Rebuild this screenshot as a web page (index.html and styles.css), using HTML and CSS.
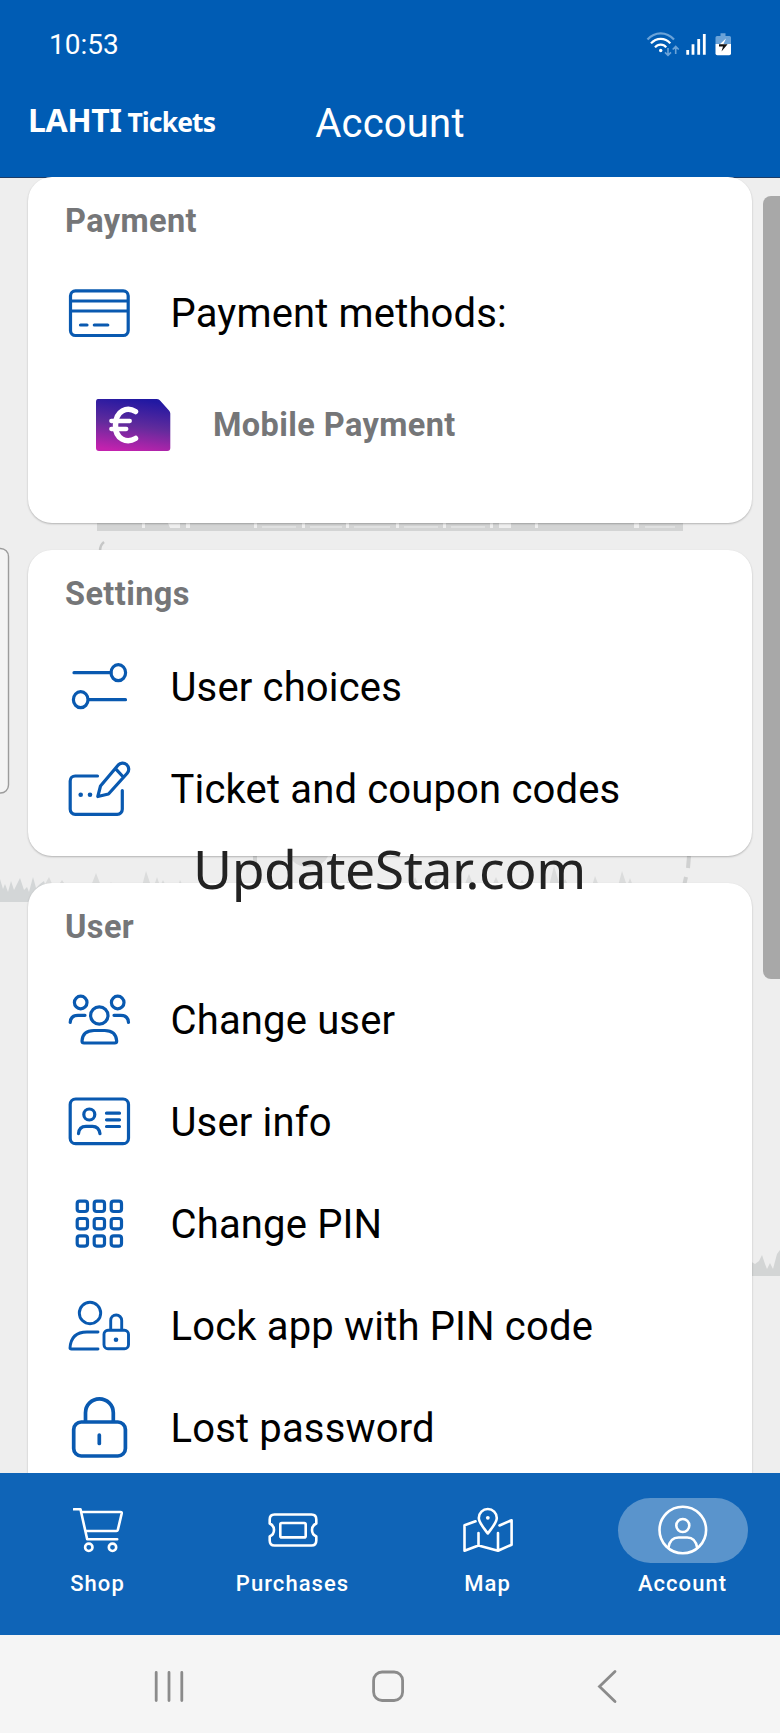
FILE: index.html
```html
<!DOCTYPE html>
<html lang="en">
<head>
<meta charset="utf-8">
<title>Account</title>
<link rel="stylesheet" href="styles.css">
</head>
<body>
<div class="phone">
  <header class="header">
    <div class="status">
      <span class="clock">10:53</span>
      <svg class="status-icons" width="100" height="40" viewBox="0 0 100 40" fill="none" stroke="#fff" stroke-width="2.2">
        <path d="M7.5 15.5Q13 9.3 20.7 9.3T34 15.5" stroke="#6ba3d8"/>
        <path d="M11 19.4Q15 14.8 20.7 14.8T30.3 19.4M15 23.4Q17.3 20.6 20.7 20.6T26.2 23.4"/>
        <circle cx="20.7" cy="26.5" r="1.7" fill="#fff" stroke="none"/>
        <path d="M28 24v7M25 28.4l3 3 3-3M35.7 30v-7.500M32.700 25.500l3-3 3 3" stroke="#6ba3d8" stroke-width="1.600"/>
        <path d="M47.700 30.800V26M53 30.800V20.300M58.700 30.800V15M64.300 30.800V10" stroke-width="2.800"/>
        <path d="M75.500 20v-6.500q0-1.500 1.500-1.500h3.500V9.300h5V12H89.500q1.500 0 1.500 1.500V20z" fill="#6ba3d8" stroke="none"/>
        <path d="M75.500 20H91v9.500q0 1.800-1.800 1.800H77.300q-1.800 0-1.800-1.800z" fill="#fff" stroke="none"/>
        <path d="M86 14.500L79 21h4z" fill="#fff" stroke="none"/>
        <path d="M79 20.200h8.600L81.500 27.500 83 22.600h-4z" fill="#111" stroke="none"/>
      </svg>
    </div>
    <div class="titlebar">
      <div class="brand"><span class="brand-main">LAHTI</span><span class="brand-sub">Tickets</span></div>
      <h1 class="title">Account</h1>
    </div>
  </header>

  <main class="content">
    <svg class="scenery" width="780" height="1295" viewBox="0 178 780 1295">
      <path d="M97 520H683V531H97z" fill="#d3d4d4"/>
      <path d="M142 523h3v5h-3zM168 523h12v5h-10zM186 523h4v5h-4zM254 523h3v5h-3zM302 523h3v5h-3zM346 523h3v5h-3zM396 523h3v5h-3zM443 523h3v5h-3zM490 523h3v5h-3zM499 523h12v5h-12zM535 523h3v5h-3zM634 523h5v5h-5z" fill="#efefef"/>
      <path d="M262 527h34M310 527h32M354 527h36M404 527h34M451 527h34M645 527h30" stroke="#e0e1e1" stroke-width="2"/>
      <path d="M104 542q-4 3-4 9" stroke="#c6c7c7" stroke-width="2.500" fill="none"/>
      <rect x="-12" y="548.500" width="20.500" height="244.500" rx="8" fill="#f4f4f4" stroke="#9c9c9c" stroke-width="1.400"/>
      <path d="M255 856v10M689 856l-1 12M686 877l-2 9" stroke="#d0d1d1" stroke-width="4"/>
      <path d="M290 856h38q-4 10-18 11-16 0-20-11z" fill="#dadada"/>
      <path d="M44 886l5-9 4 9zM58 886l4-6 4 6zM91 886l5-13 5 13zM109 886l2-4 2 4zM142 886l4-15 5 15zM154 886l3-9 3 9 3-6 3 6zM178 886l2-6 3 6zM235 886l3-5 4 5zM330 886l4-12 5 12zM345 886l3-5 4 5zM412 886l3-9 4 9zM432 886l4-7 4 7zM464 886l5-12 5 12zM492 886l4-9 4 9zM518 886l4-6 4 6zM549 886l5-20 6 20zM562 886l3-7 4 7zM592 886l3-10 4 10zM618 886l4-15 5 15 3-8 3 8z" fill="#dbdcdc"/>
      <path d="M0 902V879l3 10 2-5 3 8 3-11 3 9 3-6 3-6 4 12 3-3 2 5 4-15 3 11 4-4 4-3 4 14V902z" fill="#d3d6d7"/>
      <path d="M750 1276v-15l5 3 4-3 3-6 3 9 2 5 3-6 3 6 4-15 3-4v26z" fill="#d3d5d5"/>
    </svg>

    <section class="card card-payment">
      <h2 class="card-title">Payment</h2>
      <div class="row">
        <svg class="icon" viewBox="0 0 70 70"><rect x="6.500" y="12.800" width="57.700" height="44.700" rx="5"/><path d="M6.500 23H64M6.500 33H64"/><path class="cap" d="M16.500 47h6.500M30.300 47h13.500"/></svg>
        <span class="label">Payment methods:</span>
      </div>
      <div class="method">
        <svg class="method-icon" width="76" height="54" viewBox="0 0 76 54">
          <defs><linearGradient id="pay" x1=".55" y1="0" x2=".35" y2="1"><stop offset="0" stop-color="#2118a2"/><stop offset=".5" stop-color="#612b9c"/><stop offset="1" stop-color="#c322ae"/></linearGradient></defs>
          <path d="M3 1h58.500q2 0 3.300 1.300L74 12.500q1.300 1.300 1.300 3V50q0 3-3 3H4q-3 0-3-3V4q0-3 2-3z" fill="url(#pay)"/>
          <path d="M40.500 13.500C32 8.500 21 12.500 20.500 27s11.500 18.500 20 13.500" fill="none" stroke="#fff" stroke-width="5.500" stroke-linecap="round"/>
          <path d="M16.300 23h18.500M16.300 31h15" fill="none" stroke="#fff" stroke-width="4.300" stroke-linecap="round"/>
        </svg>
        <span class="method-name">Mobile Payment</span>
      </div>
    </section>

    <section class="card card-settings">
      <h2 class="card-title">Settings</h2>
      <div class="row">
        <svg class="icon" viewBox="0 0 70 70"><path class="cap" d="M10 20.700H47M25 47.700H61.500"/><ellipse cx="54.300" cy="20.700" rx="7.300" ry="8"/><ellipse cx="16.700" cy="47.700" rx="7.300" ry="8"/></svg>
        <span class="label">User choices</span>
      </div>
      <div class="row">
        <svg class="icon" viewBox="0 0 70 70"><path class="cap" d="M33.500 22H11.200a5 5 0 0 0-5 5V55.300a5 5 0 0 0 5 5H53.300a5 5 0 0 0 5-5V36.500"/><path d="M33.800 42.500L36.500 32 54 11.200A6 6 0 0 1 63.200 19.300L44.500 40ZM51.500 14.700L58.800 22.500"/><circle class="dot" cx="16.700" cy="40.700" r="2.300"/><circle class="dot" cx="26" cy="40.700" r="2.300"/></svg>
        <span class="label">Ticket and coupon codes</span>
      </div>
    </section>

    <section class="card card-user">
      <h2 class="card-title">User</h2>
      <div class="row">
        <svg class="icon" viewBox="0 0 70 70"><circle cx="16.700" cy="17.500" r="6.300"/><circle cx="53.700" cy="17.500" r="6.300"/><circle cx="35.300" cy="30.500" r="8.700"/><path class="cap" d="M6.200 37.500Q6.500 30.300 14 30.300H21M64.500 37.500Q64.200 30.300 56.700 30.300H50"/><path d="M20 58Q18 58 18 56 18.500 45.700 30 45.500H40.700Q52 45.700 52.700 56 52.700 58 50.700 58Z"/></svg>
        <span class="label">Change user</span>
      </div>
      <div class="row">
        <svg class="icon" viewBox="0 0 70 70"><rect x="6.200" y="12" width="58.300" height="44.700" rx="5.500"/><circle cx="25.300" cy="27.500" r="5.500"/><path class="cap" d="M14.500 46.700Q15 39.300 22 39.300H28.500Q35 39.300 36 46.700M42.500 26.200H55.500M42.500 32.800H55.500M42.500 39.500H55.500"/></svg>
        <span class="label">User info</span>
      </div>
      <div class="row">
        <svg class="icon" viewBox="0 0 70 70"><rect x="13.200" y="12.200" width="10.300" height="10.300" rx="2.500"/><rect x="30.200" y="12.200" width="10.300" height="10.300" rx="2.500"/><rect x="47.200" y="12.200" width="10.300" height="10.300" rx="2.500"/><rect x="13.200" y="29.500" width="10.300" height="10.300" rx="2.500"/><rect x="30.200" y="29.500" width="10.300" height="10.300" rx="2.500"/><rect x="47.200" y="29.500" width="10.300" height="10.300" rx="2.500"/><rect x="13.200" y="46.800" width="10.300" height="10.300" rx="2.500"/><rect x="30.200" y="46.800" width="10.300" height="10.300" rx="2.500"/><rect x="47.200" y="46.800" width="10.300" height="10.300" rx="2.500"/></svg>
        <span class="label">Change PIN</span>
      </div>
      <div class="row">
        <svg class="icon thin" viewBox="0 0 70 70"><circle cx="26" cy="22" r="10.700"/><path class="cap" d="M34 41H23Q7 41 6 57 6 58 7.500 58H34"/><rect x="40" y="39.300" width="24.500" height="18.400" rx="4"/><path d="M46.700 39V29.500a5.500 5.500 0 0 1 11 0V39"/><circle class="dot" cx="52" cy="48.700" r="2.300"/></svg>
        <span class="label">Lock app with PIN code</span>
      </div>
      <div class="row">
        <svg class="icon thick" viewBox="0 0 70 70"><rect x="9.700" y="29" width="51.700" height="34" rx="7.500"/><path d="M21.500 29V19.700a13.900 13.900 0 0 1 27.800 0V29"/><path class="cap" d="M35.300 42v8.500"/></svg>
        <span class="label">Lost password</span>
      </div>
    </section>

    <div class="scrollbar"></div>
    <div class="watermark">UpdateStar.com</div>
  </main>

  <nav class="tabs">
    <a class="tab">
      <span class="pill"><svg viewBox="0 0 50 50"><path d="M.7 4.300H7.500L14.200 34.300H44.200M8.300 7H47.500Q49 7 48.700 8.500L44.800 25Q44.500 26 43.500 26H12.500"/><circle cx="15.800" cy="42.300" r="3.700"/><circle cx="39.500" cy="42.300" r="3.700"/></svg></span>
      <span class="tab-label">Shop</span>
    </a>
    <a class="tab">
      <span class="pill"><svg viewBox="0 0 50 50"><path d="M6.500 9.500H43.500Q48.300 9.500 48.300 14.500V18.500Q44 20.500 44 25T48.300 31.500V35.500Q48.300 40.500 43.500 40.500H6.500Q1.700 40.500 1.700 35.500V31.500Q6 29.500 6 25T1.700 18.500V14.500Q1.700 9.500 6.500 9.500Z"/><rect x="12.300" y="18" width="25.400" height="14.400" rx="1.500"/></svg></span>
      <span class="tab-label">Purchases</span>
    </a>
    <a class="tab">
      <span class="pill"><svg viewBox="0 0 50 50"><path d="M12.500 16.300L1.500 20.300V45.800L15.500 40.500 35 45.800 48.600 39.700V15.200L36.500 20.500M15.500 28V40.500M35 28V45.500M24.800 28.500C20 22 15.800 17.500 15.800 13A9 9 0 0 1 33.800 13C33.800 17.500 29.600 22 24.800 28.500Z"/><circle cx="24.800" cy="12.800" r="1.900" fill="#fff" stroke="none"/></svg></span>
      <span class="tab-label">Map</span>
    </a>
    <a class="tab">
      <span class="pill active"><svg viewBox="0 0 50 50"><circle cx="24.800" cy="25" r="23.300"/><circle cx="24.800" cy="20.500" r="6.500"/><path d="M10.300 43Q12 32.500 20.500 32.500H29.200Q37.500 32.500 39.300 43"/></svg></span>
      <span class="tab-label">Account</span>
    </a>
  </nav>

  <footer class="sysnav">
    <svg width="36" height="36" viewBox="0 0 36 36"><path d="M5.200 4.500v28M18 4.500v28M30.800 4.500v28"/></svg>
    <svg width="36" height="36" viewBox="0 0 36 36"><rect x="3.600" y="4" width="29" height="28.500" rx="8.500"/></svg>
    <svg width="36" height="36" viewBox="0 0 36 36"><path d="M26 3.500L10.500 18.500 26 33.500"/></svg>
  </footer>
</div>
</body>
</html>
```
FILE: styles.css
```css
* { box-sizing: border-box; }
body { margin: 0; font-family: Roboto, "Liberation Sans", sans-serif; }
h1, h2 { margin: 0; font-weight: 400; }
.phone { width: 780px; height: 1733px; display: flex; flex-direction: column; overflow: hidden; background: #eee; }

.header { height: 177px; flex: none; background: #005cb4; color: #fff; display: flex; flex-direction: column; }
.status { height: 90px; padding: 0 40px 0 49px; display: flex; justify-content: space-between; align-items: flex-start; }
.clock { font-size: 28px; line-height: 32px; padding-top: 29px; }
.status-icons { margin-top: 24px; }
.titlebar { flex: 1; display: grid; grid-template-columns: 1fr auto 1fr; align-items: start; padding: 11px 28px 0; }
.brand { display: flex; align-items: baseline; gap: 6px; padding-top: 1px; font-family: "Noto Sans", sans-serif; font-weight: 700; line-height: 36px; }
.brand-main { font-size: 32px; letter-spacing: -.4px; }
.brand-sub { font-size: 26.500px; letter-spacing: -.9px; }
.title { font-size: 40px; line-height: 46px; letter-spacing: .2px; }

.content { position: relative; height: 1296px; flex: none; padding: 0 28px; overflow: hidden; display: flex; flex-direction: column; gap: 27px; background: linear-gradient(#1c3c66 0 1px, #eee 1px); }
.scenery { position: absolute; left: 0; top: 1px; }
.card { position: relative; flex: none; width: 724px; padding: 0 36px; background: #fff; border-radius: 24px; box-shadow: 0 1px 2px rgba(0, 0, 0, .25); }
.card-payment { height: 346px; }
.card-settings { height: 306px; }
.card-user { height: 640px; }
.card-title { height: 86px; padding: 25px 0 0 1px; font-size: 32.500px; line-height: 38px; font-weight: 700; letter-spacing: .4px; color: #757678; }
.card-payment .card-title { height: 85px; }
.row { height: 102px; display: flex; align-items: center; gap: 36.500px; }
.label { padding-top: 2px; font-size: 40px; line-height: 48px; letter-spacing: .16px; color: #000; white-space: nowrap; }
.icon { width: 70px; height: 70px; flex: none; margin-left: -.5px; margin-right: .5px; fill: none; stroke: #0959b0; stroke-width: 3.200; stroke-linejoin: round; }
.icon.thin { stroke-width: 2.900; }
.icon.thick { stroke-width: 3.700; }
.card-user .icon { margin-bottom: 1px; }
.icon .cap { stroke-linecap: round; }
.icon .dot { fill: #0959b0; stroke: none; }
.method { display: flex; align-items: center; gap: 42px; height: 121px; padding-left: 31px; }
.method-name { padding-top: 1px; font-size: 32.500px; line-height: 38px; font-weight: 700; letter-spacing: .4px; color: #757678; }

.scrollbar { position: absolute; left: 763px; top: 19px; width: 24px; height: 783px; border-radius: 8px; background: #a8a8a8; }
.watermark { position: absolute; left: 193px; top: 653.500px; font-family: "Noto Sans", sans-serif; font-size: 53.500px; line-height: 76px; letter-spacing: -.45px; color: #222; white-space: nowrap; }

.tabs { height: 162px; flex: none; background: #0f64b7; color: #fff; display: grid; grid-template-columns: repeat(4, 195px); }
.tab { display: flex; flex-direction: column; align-items: center; padding-top: 24.500px; }
.pill { width: 130px; height: 65px; border-radius: 33px; display: flex; align-items: center; justify-content: center; }
.pill.active { background: #5a94cc; }
.pill svg { width: 50px; height: 50px; fill: none; stroke: #fff; stroke-width: 2.600; stroke-linejoin: round; stroke-linecap: round; }
.tab-label { margin-top: 8px; font-size: 22px; line-height: 26px; font-weight: 500; letter-spacing: 1.050px; }

.sysnav { flex: 1; background: #f5f5f5; display: flex; justify-content: space-between; padding: 33px 155px 0 151px; }
.sysnav svg { fill: none; stroke: #8b8b8b; stroke-width: 2.800; stroke-linecap: round; }
```
